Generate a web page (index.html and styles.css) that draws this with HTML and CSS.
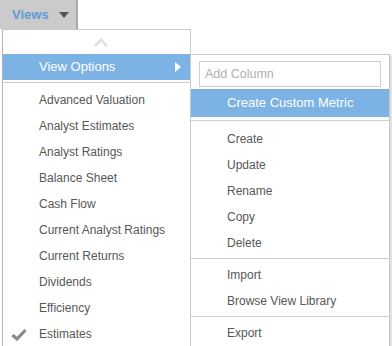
FILE: index.html
```html
<!DOCTYPE html>
<html lang="en">
<head>
    <meta charset="UTF-8">
    <title>Views</title>
    <link rel="stylesheet" href="styles.css">
</head>
<body>
    <div class="views-btn">
        <span>Views</span>
        <svg class="caret" width="10" height="6" viewBox="0 0 10 6"><path d="M0 0H10L5 6Z" fill="#555"/></svg>
    </div>
    <div class="menus">
        <div class="menu">
            <div class="scroll-up">
                <svg width="16" height="10" viewBox="0 0 16 10"><path d="M2 9L8 3L14 9" fill="none" stroke="#e2e2e2" stroke-width="3"/></svg>
            </div>
            <div class="item active">View Options
                <svg class="arrow" width="6" height="10" viewBox="0 0 6 10"><path d="M0 0L6 5L0 10Z" fill="#fff"/></svg>
            </div>
            <div class="sep"></div>
            <div class="item">Advanced Valuation</div>
            <div class="item">Analyst Estimates</div>
            <div class="item">Analyst Ratings</div>
            <div class="item">Balance Sheet</div>
            <div class="item">Cash Flow</div>
            <div class="item">Current Analyst Ratings</div>
            <div class="item">Current Returns</div>
            <div class="item">Dividends</div>
            <div class="item">Efficiency</div>
            <div class="item">
                <svg class="check" width="16" height="13" viewBox="0 0 16 13"><path d="M1.5 7L6 11L14.5 2" fill="none" stroke="#8a8a8a" stroke-width="3.2"/></svg>
                Estimates
            </div>
        </div>
        <div class="submenu">
            <input class="search" type="text" placeholder="Add Column">
            <div class="item active">Create Custom Metric</div>
            <div class="sep first"></div>
            <div class="item">Create</div>
            <div class="item">Update</div>
            <div class="item">Rename</div>
            <div class="item">Copy</div>
            <div class="item">Delete</div>
            <div class="sep"></div>
            <div class="item">Import</div>
            <div class="item">Browse View Library</div>
            <div class="sep"></div>
            <div class="item">Export</div>
        </div>
    </div>
</body>
</html>
```

FILE: styles.css
```css
body {
    margin: 0;
    background: #fff;
    font-family: "Liberation Sans", Arial, sans-serif;
    font-size: 12px;
    color: #575757;
    overflow: hidden;
}
.views-btn {
    display: flex;
    align-items: center;
    height: 29px;
    width: 78px;
    padding-left: 12px;
    background-color: #cbcbcb;
    border-right: 2px solid #a9a9a9;
    box-sizing: border-box;
    font-weight: bold;
    font-size: 13px;
    color: #5f9ad6;
}
.caret {
    margin-left: 10px;
}
.menus {
    display: flex;
    align-items: flex-start;
}
.menu {
    margin-left: 2px;
    width: 189px;
    height: 330px;
    background: #fff;
    border: 1px solid #c9c9c9;
    border-left-color: #aab4c4;
    border-bottom: none;
    box-sizing: border-box;
}
.scroll-up {
    height: 24px;
    display: flex;
    justify-content: center;
    align-items: center;
    padding-left: 8px;
}
.item {
    position: relative;
    height: 26px;
    line-height: 26px;
    padding-left: 36px;
    white-space: nowrap;
}
.item.active {
    background-color: #7db3e4;
    color: #fff;
    font-size: 13px;
}
.arrow {
    position: absolute;
    right: 9px;
    top: 8px;
}
.check {
    position: absolute;
    left: 8px;
    top: 7px;
}
.sep {
    height: 1px;
    margin: 2px 0 4px;
    background-color: #cfcfcf;
}
.submenu {
    margin-top: 25px;
    margin-left: -1px;
    width: 200px;
    padding: 6px 0 0;
    background: #fff;
    border: 1px solid #c9c9c9;
    box-sizing: border-box;
    box-shadow: 2px 1px 2px rgba(0, 0, 0, 0.15);
}
.search {
    display: block;
    margin: 0 8px 2px;
    width: 182px;
    height: 26px;
    padding: 0 5px;
    box-sizing: border-box;
    border: 1px solid #cfcfcf;
    font-family: inherit;
    font-size: 12.5px;
    color: #444;
    outline: none;
}
.search::placeholder {
    color: #b0b0b0;
}
.submenu .item.active {
    height: 28px;
    line-height: 28px;
}
.submenu .sep {
    margin: 2px 0 3px;
}
.submenu .sep.first {
    margin: 3px 0 5px;
}
```
